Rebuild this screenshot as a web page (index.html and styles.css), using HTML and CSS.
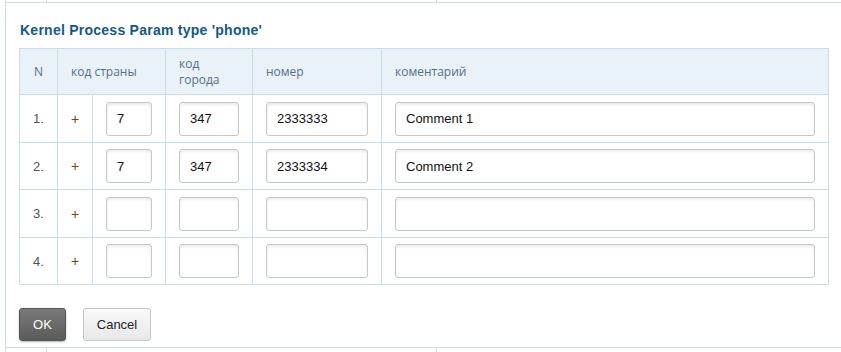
FILE: index.html
```html
<!DOCTYPE html>
<html lang="ru">
<head>
    <meta charset="UTF-8">
    <title>Kernel Process Param</title>
    <link rel="stylesheet" href="styles.css">
</head>
<body>
    <div class="frame">
        <div class="stub">
            <div class="stub-cell first"></div>
            <div class="stub-cell second"></div>
        </div>

        <div class="content">
            <h3 class="title">Kernel Process Param type 'phone'</h3>

            <table class="phones">
                <colgroup>
                    <col class="c-n">
                    <col class="c-plus">
                    <col class="c-country">
                    <col class="c-city">
                    <col class="c-number">
                    <col class="c-comment">
                </colgroup>
                <thead>
                    <tr>
                        <th class="center">N</th>
                        <th colspan="2">код страны</th>
                        <th>код<br>города</th>
                        <th>номер</th>
                        <th>коментарий</th>
                    </tr>
                </thead>
                <tbody>
                    <tr>
                        <td class="num">1.</td>
                        <td class="plus">+</td>
                        <td><input type="text" class="in-country" value="7"></td>
                        <td><input type="text" class="in-city" value="347"></td>
                        <td><input type="text" class="in-number" value="2333333"></td>
                        <td><input type="text" class="in-comment" value="Comment 1"></td>
                    </tr>
                    <tr>
                        <td class="num">2.</td>
                        <td class="plus">+</td>
                        <td><input type="text" class="in-country" value="7"></td>
                        <td><input type="text" class="in-city" value="347"></td>
                        <td><input type="text" class="in-number" value="2333334"></td>
                        <td><input type="text" class="in-comment" value="Comment 2"></td>
                    </tr>
                    <tr>
                        <td class="num">3.</td>
                        <td class="plus">+</td>
                        <td><input type="text" class="in-country"></td>
                        <td><input type="text" class="in-city"></td>
                        <td><input type="text" class="in-number"></td>
                        <td><input type="text" class="in-comment"></td>
                    </tr>
                    <tr>
                        <td class="num">4.</td>
                        <td class="plus">+</td>
                        <td><input type="text" class="in-country"></td>
                        <td><input type="text" class="in-city"></td>
                        <td><input type="text" class="in-number"></td>
                        <td><input type="text" class="in-comment"></td>
                    </tr>
                </tbody>
            </table>

            <div class="actions">
                <button class="btn btn-ok">OK</button>
                <button class="btn btn-cancel">Cancel</button>
            </div>
        </div>

        <div class="stub bottom">
            <div class="stub-cell first"></div>
            <div class="stub-cell second"></div>
        </div>
    </div>
</body>
</html>
```

FILE: styles.css
```css
body {
    margin: 0;
    font-family: 'Liberation Sans', Arial, sans-serif;
    font-size: 13px;
    color: #222;
    background: #fff;
}
.frame {
    margin-left: 5px;
    border-left: 1px solid #c9dcea;
}
.stub {
    display: flex;
    height: 2px;
    border-bottom: 1px solid #c9dcea;
}
.stub.bottom {
    border-bottom: none;
    border-top: 1px solid #c9dcea;
    height: 6px;
}
.stub-cell {
    border-right: 1px solid #c9dcea;
}
.stub-cell.first {
    width: 40px;
}
.stub-cell.second {
    width: 389px;
}
.content {
    padding: 18px 12px 6px 13px;
}
.title {
    margin: 0 0 9px 1px;
    font-size: 14px;
    font-weight: bold;
    letter-spacing: 0.25px;
    color: #14588b;
    line-height: 18px;
}
.phones {
    width: 810px;
    border-collapse: collapse;
    table-layout: fixed;
}
.c-n { width: 38px; }
.c-plus { width: 35px; }
.c-country { width: 73px; }
.c-city { width: 87px; }
.c-number { width: 129px; }
.phones th,
.phones td {
    border: 1px solid #c9dcea;
    text-align: left;
    padding: 6.5px 13px 6px;
}
.phones th {
    background-color: #e9f1f9;
    color: #557089;
    font-family: 'Open Sans', sans-serif;
    font-weight: normal;
    font-size: 12px;
    line-height: 16px;
    height: 33px;
    padding-top: 6px;
    padding-bottom: 6px;
}
.phones th.center,
.phones td.num,
.phones td.plus {
    text-align: center;
    padding-left: 0;
    padding-right: 0;
}
.phones td.num {
    color: #555;
}
.phones td.plus {
    color: #6e4520;
    font-size: 14px;
}
input {
    display: block;
    height: 34px;
    box-sizing: border-box;
    padding: 0 10px;
    border: 1px solid #c8c8c8;
    border-radius: 3px;
    box-shadow: inset 0 2px 3px rgba(0,0,0,0.08);
    background-color: #fff;
    font-family: 'Liberation Sans', Arial, sans-serif;
    font-size: 13px;
    color: #111;
}
.in-country { width: 46px; }
.in-city { width: 60px; }
.in-number { width: 102px; }
.in-comment { width: 100%; }
.actions {
    display: flex;
    gap: 17px;
    margin-top: 23px;
}
.btn {
    height: 33px;
    border-radius: 3px;
    font-family: 'Liberation Sans', Arial, sans-serif;
    font-size: 13px;
    cursor: pointer;
}
.btn-ok {
    width: 47px;
    color: #fff;
    border: 1px solid #555;
    background: linear-gradient(#7a7a7a, #5a5a5a);
    box-shadow: 0 1px 2px rgba(0,0,0,0.3);
}
.btn-cancel {
    width: 68px;
    color: #222;
    border: 1px solid #c6c6c6;
    background: linear-gradient(#f9f9f9, #e8e8e8);
}
```
